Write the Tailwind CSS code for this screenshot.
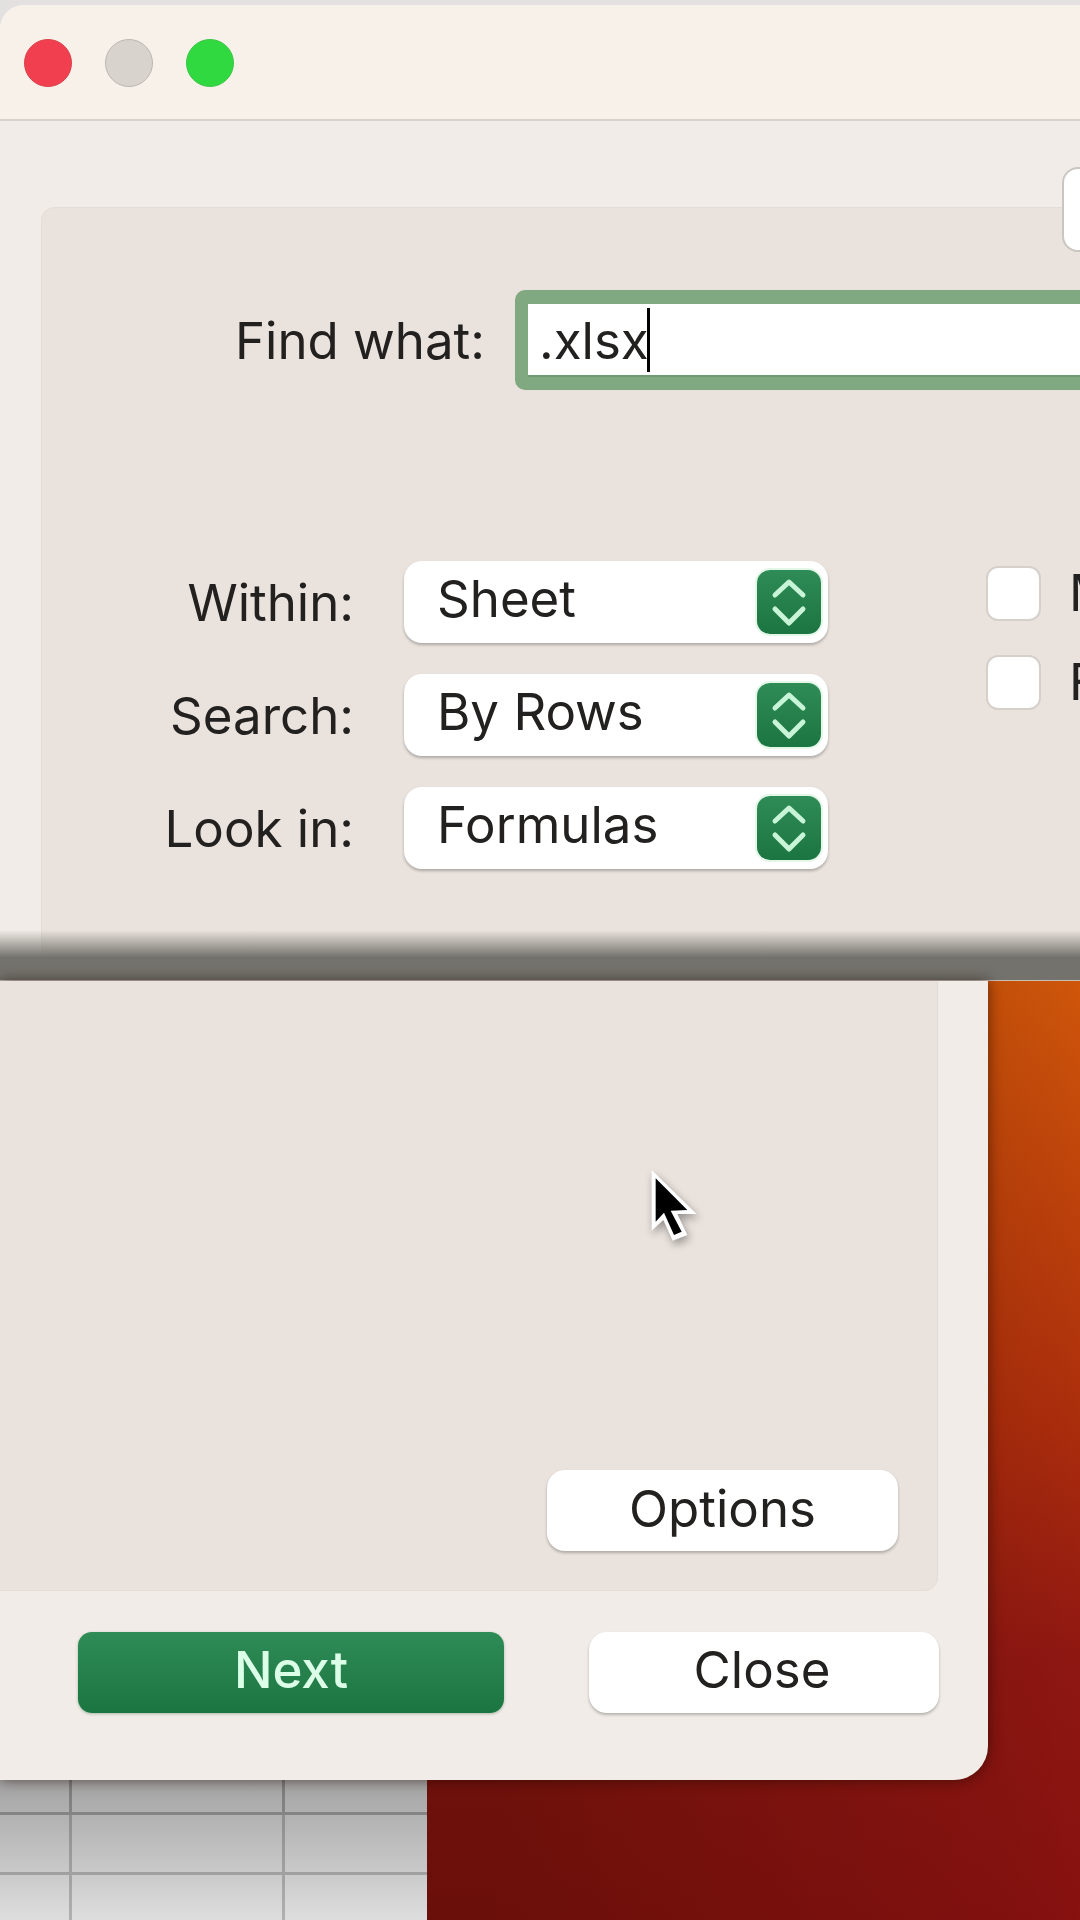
<!DOCTYPE html>
<html lang="en">
<head>
  <meta charset="UTF-8">
  <meta name="viewport" content="width=device-width, initial-scale=1.0">
  <title>Find</title>
  <script src="https://cdn.jsdelivr.net/npm/@tailwindcss/browser@4"></script>
</head>
<body class="bg-[#e3e1e0]">
  <div class="relative w-[1080px] h-[1920px] overflow-hidden flex flex-col font-['Inter',sans-serif] text-[51px] text-[#232120]">

    <!-- upper half of the dialog -->
    <section class="relative h-[980px] shrink-0 pt-[5px] bg-[#e3e1e0]">
      <div class="h-full flex flex-col rounded-tl-[24px] overflow-hidden bg-[#f1ece7]">
        <header class="h-[116px] shrink-0 flex items-center gap-[33px] pl-[24px] pt-[2px] bg-[#f8f1ea] border-b-2 border-[#d8d2cb]">
          <span class="w-[48px] h-[48px] rounded-full bg-[#f23f50] border border-[#d9414a]"></span>
          <span class="w-[48px] h-[48px] rounded-full bg-[#d9d3ce] border border-[#bdb7b2]"></span>
          <span class="w-[48px] h-[48px] rounded-full bg-[#30d93f] border border-[#3bc648]"></span>
        </header>
        <div class="flex-1 pt-[86px] pl-[41px]">
          <div class="h-full rounded-tl-[14px] bg-[#e9e2dd] border-t border-l border-[#e4ddd7] pt-[82px]">
            <div class="flex items-center h-[100px]">
              <label class="w-[443px] shrink-0 text-right whitespace-nowrap pt-[3px]">Find what:</label>
              <div class="ml-[30px] w-[700px] h-[100px] shrink-0 rounded-[10px] bg-[#80a881] pt-[14px] pb-[13px] pl-[13px]">
                <div class="h-full flex items-center pl-[11px] bg-white border-b-2 border-[#6f9a73]">
                  <span class="pt-[3px]">.xlsx</span><span class="w-[3px] h-[64px] -ml-[2px] bg-black"></span>
                </div>
              </div>
            </div>

            <div class="mt-[171px] flex">
              <div class="w-[312px] shrink-0 flex flex-col gap-[31px] text-right whitespace-nowrap">
                <label class="h-[82px] leading-[84px]">Within:</label>
                <label class="h-[82px] leading-[84px]">Search:</label>
                <label class="h-[82px] leading-[84px]">Look in:</label>
              </div>
              <div class="ml-[50px] w-[424px] shrink-0 flex flex-col gap-[31px]">
                <div class="h-[82px] flex items-center justify-between pl-[33px] pr-[7px] rounded-[18px] bg-white shadow-[0_2px_3px_rgba(0,0,0,0.25)]">
                  <span class="pb-[6px]">Sheet</span>
                  <span class="w-[64px] h-[64px] flex items-center justify-center rounded-[13px] bg-gradient-to-b from-[#2f8c56] to-[#1b7540] shadow-[0_0_0_2px_#e2f7e8]">
                    <svg width="36" height="49" viewBox="0 0 36 49" fill="none" stroke="#c8f5d8" stroke-width="5" stroke-linecap="round" stroke-linejoin="round"><path d="M4 17 18 4 32 17"/><path d="M4 31 18 45 32 31"/></svg>
                  </span>
                </div>
                <div class="h-[82px] flex items-center justify-between pl-[33px] pr-[7px] rounded-[18px] bg-white shadow-[0_2px_3px_rgba(0,0,0,0.25)]">
                  <span class="pb-[6px]">By Rows</span>
                  <span class="w-[64px] h-[64px] flex items-center justify-center rounded-[13px] bg-gradient-to-b from-[#2f8c56] to-[#1b7540] shadow-[0_0_0_2px_#e2f7e8]">
                    <svg width="36" height="49" viewBox="0 0 36 49" fill="none" stroke="#c8f5d8" stroke-width="5" stroke-linecap="round" stroke-linejoin="round"><path d="M4 17 18 4 32 17"/><path d="M4 31 18 45 32 31"/></svg>
                  </span>
                </div>
                <div class="h-[82px] flex items-center justify-between pl-[33px] pr-[7px] rounded-[18px] bg-white shadow-[0_2px_3px_rgba(0,0,0,0.25)]">
                  <span class="pb-[6px]">Formulas</span>
                  <span class="w-[64px] h-[64px] flex items-center justify-center rounded-[13px] bg-gradient-to-b from-[#2f8c56] to-[#1b7540] shadow-[0_0_0_2px_#e2f7e8]">
                    <svg width="36" height="49" viewBox="0 0 36 49" fill="none" stroke="#c8f5d8" stroke-width="5" stroke-linecap="round" stroke-linejoin="round"><path d="M4 17 18 4 32 17"/><path d="M4 31 18 45 32 31"/></svg>
                  </span>
                </div>
              </div>
              <div class="ml-[158px] pt-[5px] flex flex-col gap-[34px] whitespace-nowrap">
                <div class="h-[55px] flex items-center gap-[28px]">
                  <span class="w-[55px] h-[55px] shrink-0 rounded-[12px] bg-white border-2 border-[#d6d0cb]"></span>
                  <span>Match case</span>
                </div>
                <div class="h-[55px] flex items-center gap-[28px]">
                  <span class="w-[55px] h-[55px] shrink-0 rounded-[12px] bg-white border-2 border-[#d6d0cb]"></span>
                  <span>Find entire cells</span>
                </div>
              </div>
            </div>
          </div>
        </div>
      </div>
      <!-- tab button sticking in from the right -->
      <div class="absolute left-[1062px] top-[167px] w-[120px] h-[85px] rounded-[16px] bg-white border-2 border-[#c9c6c2]"></div>
      <!-- dark band where the recording was cut -->
      <div class="absolute left-0 right-0 bottom-0 h-[50px] bg-gradient-to-b from-[#73726c]/0 via-[#73726c] via-55% to-[#73726c]"></div>
    </section>

    <!-- lower half -->
    <section class="flex-1 flex flex-col bg-[linear-gradient(to_right,rgba(50,10,0,0.33)_45%,rgba(50,10,0,0.08)_92%,rgba(50,10,0,0)_100%),linear-gradient(180deg,#cf560a_0%,#ab2d0c_47%,#8f1712_72%,#86110f_100%)] border-t border-[#c8c0b8]">
      <div class="w-[988px] h-[799px] shrink-0 flex flex-col rounded-br-[34px] bg-[#f1ece7] shadow-[0_0_14px_rgba(30,10,0,0.6)] z-10">
        <div class="w-[938px] h-[610px] shrink-0 flex items-end justify-end pr-[39px] pb-[39px] rounded-br-[14px] bg-[#e9e2dd] border-r border-b border-[#e4ddd7]">
          <button class="w-[351px] h-[81px] rounded-[18px] bg-white shadow-[0_2px_3px_rgba(0,0,0,0.25)] pb-[2px]">Options</button>
        </div>
        <div class="mt-[41px] ml-[78px] flex gap-[85px]">
          <button class="w-[426px] h-[81px] rounded-[14px] bg-gradient-to-b from-[#2f8c56] to-[#1b7540] text-[#dcffe8] font-medium shadow-[0_1px_3px_rgba(0,60,20,0.3)] pb-[4px]">Next</button>
          <button class="w-[350px] h-[81px] rounded-[18px] bg-white shadow-[0_2px_3px_rgba(0,0,0,0.25)] pb-[4px] pr-[4px]">Close</button>
        </div>
      </div>
      <div class="flex-1 w-[427px] grid grid-cols-[72px_213px_142px] grid-rows-[35px_60px_46px] bg-gradient-to-b from-[#a3a3a3] to-[#dedede]">
        <div class="border-r-[3px] border-b-[3px] border-black/25"></div>
        <div class="border-r-[3px] border-b-[3px] border-black/25"></div>
        <div class="border-b-[3px] border-black/25"></div>
        <div class="border-r-[3px] border-b-[3px] border-black/20"></div>
        <div class="border-r-[3px] border-b-[3px] border-black/20"></div>
        <div class="border-b-[3px] border-black/20"></div>
        <div class="border-r-[3px] border-black/20"></div>
        <div class="border-r-[3px] border-black/20"></div>
        <div></div>
      </div>
    </section>

    <!-- mouse pointer -->
    <svg class="absolute z-20 left-[640px] top-[1160px] drop-shadow-[2px_4px_4px_rgba(0,0,0,0.35)]" width="70" height="90" viewBox="120 60 210 270">
      <path d="M155 90 290 222 232 222 262 285 218 302 190 240 155 272Z" fill="#fff"/>
      <path d="M167 115 262 210 212 212 245 275 222 285 192 218 167 245Z" fill="#000"/>
    </svg>
  </div>
</body>
</html>
